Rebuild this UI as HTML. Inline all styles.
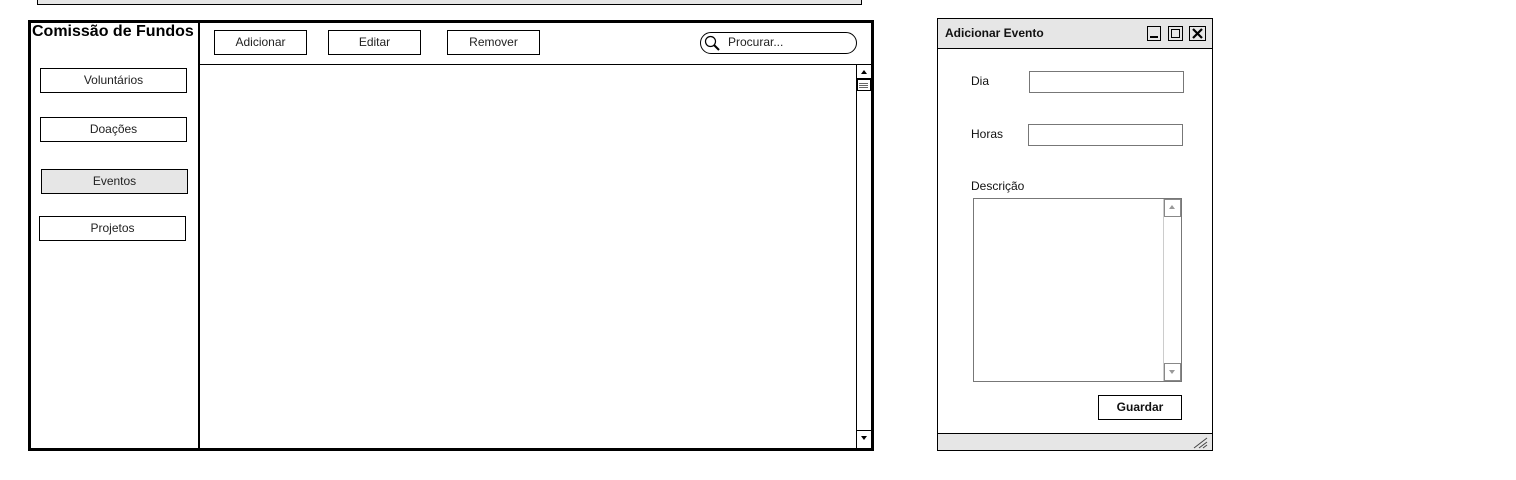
<!DOCTYPE html>
<html><head><meta charset="utf-8"><style>
body{margin:0;width:1516px;height:480px;background:#fff;position:relative;overflow:hidden;font-family:"Liberation Sans",sans-serif;}
div{position:absolute;box-sizing:border-box;}
.btn{border:1px solid #000;background:#fff;font-size:12px;text-align:center;color:#222;}
.t{font-size:12px;color:#111;white-space:nowrap;}
</style></head><body>
<div style="left:37px;top:-2px;width:825px;height:7px;border:1px solid #000;background:#e6e6e6"></div>
<div style="left:28px;top:20px;width:846px;height:431px;border:3px solid #000"></div>
<div style="left:198px;top:22px;width:2px;height:428px;background:#000"></div>
<div style="left:200px;top:64px;width:672px;height:1px;background:#000"></div>
<div style="left:32px;top:23px;font-size:16px;font-weight:bold;color:#000;white-space:nowrap">Comissão de Fundos</div>
<div class="btn" style="left:40px;top:68px;width:147px;height:25px;line-height:22px">Voluntários</div>
<div class="btn" style="left:40px;top:117px;width:147px;height:25px;line-height:22px">Doações</div>
<div class="btn" style="left:41px;top:169px;width:147px;height:25px;line-height:22px;background:#e6e6e6">Eventos</div>
<div class="btn" style="left:39px;top:216px;width:147px;height:25px;line-height:22px">Projetos</div>
<div class="btn" style="left:214px;top:30px;width:93px;height:25px;line-height:22px">Adicionar</div>
<div class="btn" style="left:328px;top:30px;width:93px;height:25px;line-height:22px">Editar</div>
<div class="btn" style="left:447px;top:30px;width:93px;height:25px;line-height:22px">Remover</div>
<div style="left:700px;top:32px;width:157px;height:22px;border:1px solid #000;border-radius:11px"></div>
<svg style="position:absolute;left:704px;top:35px" width="18" height="16"><circle cx="6.5" cy="6.5" r="5" fill="none" stroke="#000" stroke-width="1.2"/><line x1="10" y1="10" x2="15" y2="15" stroke="#000" stroke-width="2"/></svg>
<div class="t" style="left:728px;top:35px;color:#222">Procurar...</div>
<div style="left:856px;top:65px;width:1px;height:383px;background:#000"></div>
<div style="left:857px;top:65px;width:14px;height:14px;border-bottom:1px solid #000"></div>
<svg style="position:absolute;left:860px;top:69px" width="8" height="6"><polygon points="4,1 7,5 1,5" fill="#000"/></svg>
<div style="left:857px;top:79px;width:14px;height:12px;border:1px solid #000;background:#fff"></div>
<div style="left:859px;top:83px;width:9px;height:1px;background:#666"></div>
<div style="left:859px;top:85px;width:9px;height:1px;background:#666"></div>
<div style="left:859px;top:87px;width:9px;height:1px;background:#666"></div>
<div style="left:857px;top:430px;width:14px;height:1px;background:#000"></div>
<svg style="position:absolute;left:860px;top:435px" width="8" height="6"><polygon points="1,1 7,1 4,5" fill="#000"/></svg>

<div style="left:937px;top:18px;width:276px;height:433px;border:1px solid #000"></div>
<div style="left:938px;top:19px;width:274px;height:30px;background:#e6e6e6;border-bottom:1px solid #000"></div>
<div style="left:945px;top:26px;font-size:12px;font-weight:bold;color:#111">Adicionar Evento</div>
<div style="left:1147px;top:26px;width:14px;height:15px;border:1px solid #000"></div>
<div style="left:1150px;top:36px;width:8px;height:2px;background:#000"></div>
<div style="left:1168px;top:26px;width:15px;height:15px;border:1px solid #000"></div>
<div style="left:1171px;top:29px;width:9px;height:9px;border:1px solid #000"></div>
<div style="left:1189px;top:26px;width:17px;height:15px;border:1px solid #000"></div>
<svg style="position:absolute;left:1192px;top:28px" width="11" height="11"><path d="M1 1L10 10M10 1L1 10" stroke="#000" stroke-width="2.2"/></svg>
<div class="t" style="left:971px;top:74px">Dia</div>
<div style="left:1029px;top:71px;width:155px;height:22px;border:1px solid #777"></div>
<div class="t" style="left:971px;top:127px">Horas</div>
<div style="left:1028px;top:124px;width:155px;height:22px;border:1px solid #777"></div>
<div class="t" style="left:971px;top:179px">Descrição</div>
<div style="left:973px;top:198px;width:209px;height:184px;border:1px solid #777"></div>
<div style="left:1163px;top:199px;width:18px;height:182px;border-left:1px solid #ccc;background:#fff"></div>
<div style="left:1164px;top:199px;width:17px;height:18px;border:1px solid #888"></div>
<svg style="position:absolute;left:1168px;top:204px" width="8" height="6"><polygon points="4,1 7,5 1,5" fill="#999"/></svg>
<div style="left:1164px;top:363px;width:17px;height:18px;border:1px solid #888"></div>
<svg style="position:absolute;left:1168px;top:369px" width="8" height="6"><polygon points="1,1 7,1 4,5" fill="#999"/></svg>
<div class="btn" style="left:1098px;top:395px;width:84px;height:25px;line-height:22px;font-weight:bold;color:#111">Guardar</div>
<div style="left:938px;top:433px;width:274px;height:17px;background:#e6e6e6;border-top:1px solid #000"></div>
<svg style="position:absolute;left:1192px;top:436px" width="17" height="13"><path d="M2 12L15 2M7 12L15 6M11 12L15 9" stroke="#444" stroke-width="1"/></svg>
</body></html>
